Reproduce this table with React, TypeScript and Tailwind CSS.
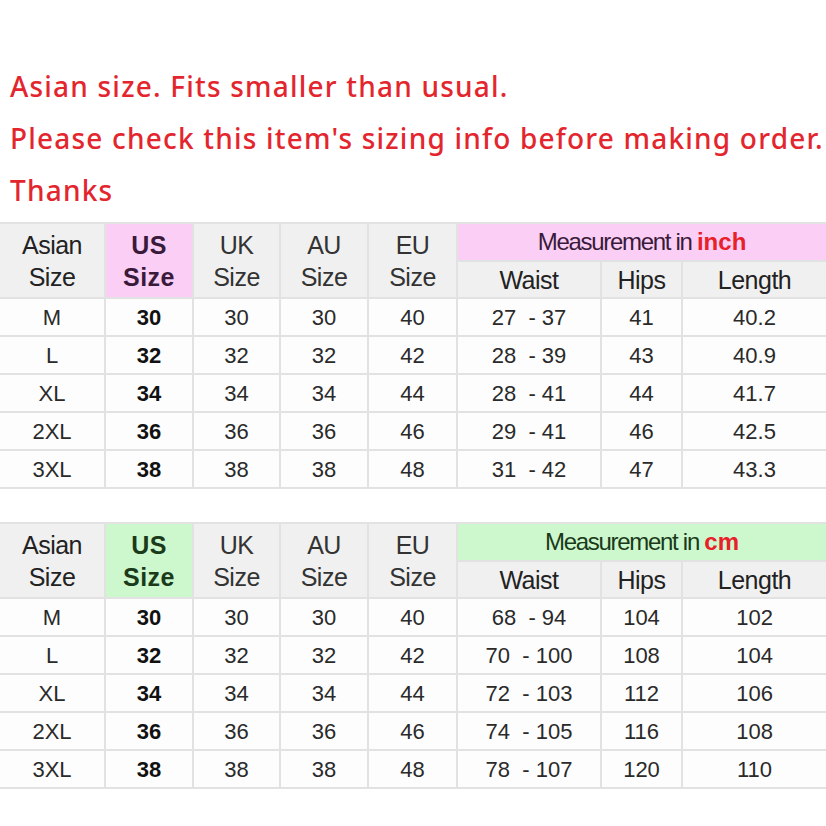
const inchRows = [
  ['M', '30', '30', '30', '40', '27  - 37', '41', '40.2'],
  ['L', '32', '32', '32', '42', '28  - 39', '43', '40.9'],
  ['XL', '34', '34', '34', '44', '28  - 41', '44', '41.7'],
  ['2XL', '36', '36', '36', '46', '29  - 41', '46', '42.5'],
  ['3XL', '38', '38', '38', '48', '31  - 42', '47', '43.3'],
];

const cmRows = [
  ['M', '30', '30', '30', '40', '68  - 94', '104', '102'],
  ['L', '32', '32', '32', '42', '70  - 100', '108', '104'],
  ['XL', '34', '34', '34', '44', '72  - 103', '112', '106'],
  ['2XL', '36', '36', '36', '46', '74  - 105', '116', '108'],
  ['3XL', '38', '38', '38', '48', '78  - 107', '120', '110'],
];

const widths = [105, 88, 87, 88, 89, 144, 81, 144];

const cell = 'border-2 border-[#e2e2e2] bg-[#f0f0f0] text-[25px] leading-[32px] tracking-[-0.5px]';

function SizeTable({ rows, unit, accent, ink }: { rows: string[][]; unit: string; accent: string; ink: string }) {
  return (
    <table className="w-[826px] table-fixed border-collapse font-['Liberation_Sans',Arial,sans-serif]">
      <colgroup>
        {widths.map((w, i) => (
          <col key={i} style={{ width: w }} />
        ))}
      </colgroup>
      <thead>
        <tr className="h-[38px]">
          <th rowSpan={2} className={`${cell} font-normal text-[#222] border-l-0`}>Asian<br />Size</th>
          <th rowSpan={2} className={`${cell} font-bold text-[23px] tracking-[0.5px]`} style={{ background: accent, color: ink }}>
            US<br />Size
          </th>
          <th rowSpan={2} className={`${cell} font-normal text-[#333]`}>UK<br />Size</th>
          <th rowSpan={2} className={`${cell} font-normal text-[#333]`}>AU<br />Size</th>
          <th rowSpan={2} className={`${cell} font-normal text-[#333]`}>EU<br />Size</th>
          <th
            colSpan={3}
            className="border-2 border-r-0 border-[#e2e2e2] font-normal text-[24px] tracking-[-1.3px]"
            style={{ background: accent, color: ink }}
          >
            Measurement in <span className="font-bold text-[#e8202a] tracking-normal">{unit}</span>
          </th>
        </tr>
        <tr className="h-[37px]">
          <th className={`${cell} font-normal text-[#222]`}>Waist</th>
          <th className={`${cell} font-normal text-[#222]`}>Hips</th>
          <th className={`${cell} font-normal text-[#222] border-r-0`}>Length</th>
        </tr>
      </thead>
      <tbody>
        {rows.map((r) => (
          <tr key={r[0]} className="h-[38px]">
            {r.map((c, i) => (
              <td
                key={i}
                className={`border-2 border-[#e2e2e2] bg-[#fdfdfd] text-center text-[22px] whitespace-pre ${
                  i === 1 ? 'font-bold text-[#111]' : 'text-[#2a2a2a]'
                } ${i === 0 ? 'border-l-0' : ''} ${i === 7 ? 'border-r-0' : ''}`}
              >
                {c}
              </td>
            ))}
          </tr>
        ))}
      </tbody>
    </table>
  );
}

export default function App() {
  return (
    <div className="w-[826px] h-[826px] bg-white overflow-hidden pt-[60px]">
      <div className="pl-[10px] text-[#e3262e] font-['Noto_Sans',sans-serif] font-medium text-[28px] leading-[52px] tracking-[1.2px] mb-[6px] whitespace-nowrap">
        <p>Asian size. Fits smaller than usual.</p>
        <p>Please check this item's sizing info before making order.</p>
        <p>Thanks</p>
      </div>
      <SizeTable rows={inchRows} unit="inch" accent="#fbcff5" ink="#3a1a3a" />
      <div className="h-[33px]" />
      <SizeTable rows={cmRows} unit="cm" accent="#cdf7cd" ink="#1a3a1a" />
    </div>
  );
}
